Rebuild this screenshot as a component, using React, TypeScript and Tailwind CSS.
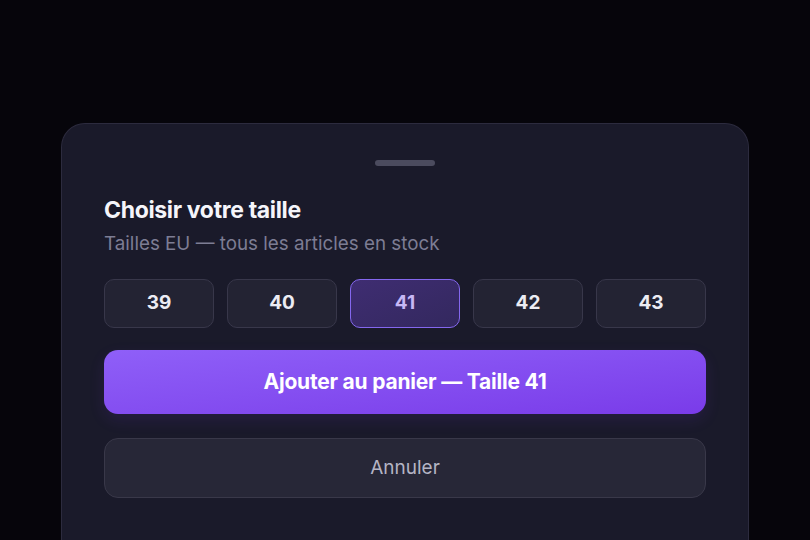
import { useState } from "react";

const SIZES = ["39", "40", "41", "42", "43"];

const App = () => {
	const [size, setSize] = useState("41");

	return (
		<div
			className="w-[810px] h-[540px] overflow-hidden bg-[#06050b] pt-[123px] px-[61px]"
			style={{ fontFamily: "Inter, 'Noto Sans', sans-serif" }}
		>
			{/* Bottom sheet */}
			<div className="h-[440px] rounded-t-[24px] border border-b-0 border-[#2c2b3e] bg-[#1a1a2a] px-[42px] pt-[36px]">
				{/* Drag handle */}
				<div className="mx-auto h-[6px] w-[60px] rounded-full bg-[#4b4b5e]" />

				<h2 className="mt-[30px] text-[23px] font-bold leading-[28px] tracking-[-0.015em] text-[#f5f5fa]">
					Choisir votre taille
				</h2>
				<p className="mt-[9px] text-[18.8px] leading-[22px] text-[#7d7d94]">
					Tailles EU — tous les articles en stock
				</p>

				{/* Size picker */}
				<div className="mt-[24px] grid grid-cols-5 gap-[13px]">
					{SIZES.map((s) => (
						<button
							key={s}
							onClick={() => setSize(s)}
							className={
								s === size
									? "h-[49px] rounded-[10px] border border-[#8467ee] bg-gradient-to-br from-[#3f2d72] to-[#33285e] text-[19px] font-bold text-[#c7b8f5]"
									: "h-[49px] rounded-[10px] border border-[#38374a] bg-[#232333] text-[19px] font-bold text-[#ececf3]"
							}
						>
							{s}
						</button>
					))}
				</div>

				{/* Add to cart */}
				<button className="mt-[22px] flex h-[64px] w-full items-center justify-center rounded-[14px] bg-gradient-to-br from-[#8f5ff8] to-[#7a3be9] text-[21px] font-bold tracking-[-0.01em] text-white shadow-[0_6px_16px_rgba(124,58,237,0.12)]">
					Ajouter au panier — Taille {size}
				</button>

				{/* Cancel */}
				<button className="mt-[24px] flex h-[60px] w-full items-center justify-center rounded-[14px] border border-[#393849] bg-[#272737] text-[19px] text-[#b4b4c4]">
					Annuler
				</button>
			</div>
		</div>
	);
};

export default App;
